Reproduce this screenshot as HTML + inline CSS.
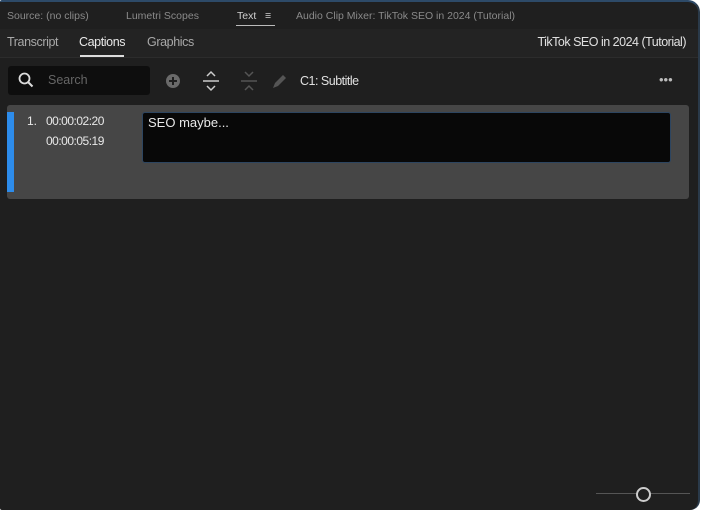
<!DOCTYPE html>
<html><head><style>
html,body{margin:0;padding:0;width:701px;height:511px;overflow:hidden;background:#fff}
body{font-family:"Liberation Sans",sans-serif;}
#p{position:absolute;left:0;top:0;width:700px;height:510px;background:#1f1f1f;border-radius:2px 12px 10px 2px;border-top:2px solid #2d4a68;border-right:2px solid #2a3a4a;box-sizing:border-box;overflow:hidden}
.t{position:absolute;white-space:nowrap}
</style></head><body>
<div id="p">
<div class="t" style="left:7px;top:8px;font-size:10.5px;color:#8a8a8a">Source: (no clips)</div>
<div class="t" style="left:126px;top:8px;font-size:10.5px;color:#8a8a8a">Lumetri Scopes</div>
<div class="t" style="left:237px;top:8px;font-size:10.5px;color:#d0d0d0">Text&nbsp;&nbsp; ≡</div>
<div style="position:absolute;left:236px;top:23px;width:39px;height:1px;background:#bbb"></div>
<div class="t" style="left:296px;top:8px;font-size:10.5px;color:#8a8a8a">Audio Clip Mixer: TikTok SEO in 2024 (Tutorial)</div>
<div style="position:absolute;left:0;top:27px;width:700px;height:28px;background:#232323;border-bottom:1px solid #2c2c2c"></div>
<div class="t" style="left:7px;top:33px;font-size:12.5px;color:#a8a8a8;letter-spacing:-0.4px">Transcript</div>
<div class="t" style="left:79px;top:33px;font-size:12.5px;color:#e8e8e8;letter-spacing:-0.4px">Captions</div>
<div style="position:absolute;left:80px;top:53px;width:44px;height:2px;background:#ddd"></div>
<div class="t" style="left:147px;top:33px;font-size:12.5px;color:#a8a8a8;letter-spacing:-0.4px">Graphics</div>
<div class="t" style="right:12px;top:33px;font-size:12.5px;color:#e0e0e0;letter-spacing:-0.5px">TikTok SEO in 2024 (Tutorial)</div>
<div style="position:absolute;left:8px;top:64px;width:142px;height:29px;background:#0e0e0e;border-radius:3px"></div>
<svg style="position:absolute;left:18px;top:70px" width="16" height="16"><circle cx="6.5" cy="6.5" r="5" fill="none" stroke="#ddd" stroke-width="1.8"/><line x1="10" y1="10" x2="14.5" y2="14.5" stroke="#ddd" stroke-width="2"/></svg>
<div class="t" style="left:48px;top:71px;font-size:12.5px;color:#666">Search</div>
<svg style="position:absolute;left:165px;top:71px" width="16" height="16"><circle cx="8" cy="8" r="7" fill="#6a6a6a"/><path d="M8 4v8M4 8h8" stroke="#1f1f1f" stroke-width="2"/></svg>
<svg style="position:absolute;left:202px;top:68px" width="18" height="22"><path d="M5 6l4-4 4 4M5 16l4 4 4-4M1 11h16" fill="none" stroke="#ccc" stroke-width="1.5"/></svg>
<svg style="position:absolute;left:240px;top:68px" width="18" height="22"><path d="M5 2l4 4 4-4M5 20l4-4 4 4M1 11h16" fill="none" stroke="#555" stroke-width="1.5"/></svg>
<svg style="position:absolute;left:271px;top:70px" width="16" height="18"><path d="M2 16l2-5 8-8 3 3-8 8z" fill="#555"/></svg>
<div class="t" style="left:300px;top:72px;font-size:12.5px;color:#e0e0e0;letter-spacing:-0.5px">C1: Subtitle</div>
<div class="t" style="left:659px;top:70px;font-size:13px;color:#bbb">•••</div>
<div style="position:absolute;left:7px;top:103px;width:682px;height:94px;background:#464646;border-radius:3px"></div>
<div style="position:absolute;left:7px;top:110px;width:7px;height:80px;background:#2d8ceb"></div>
<div class="t" style="left:27px;top:112px;font-size:12px;color:#e8e8e8">1.</div>
<div class="t" style="left:46px;top:112px;font-size:12px;color:#e8e8e8;letter-spacing:-0.5px">00:00:02:20</div>
<div class="t" style="left:46px;top:132px;font-size:12px;color:#e8e8e8;letter-spacing:-0.5px">00:00:05:19</div>
<div style="position:absolute;left:142px;top:110px;width:529px;height:51px;background:#080808;border:1px solid #2d4560;border-radius:3px;box-sizing:border-box"></div>
<div class="t" style="left:148px;top:113px;font-size:13px;color:#e8e8e8">SEO maybe...</div>
<div style="position:absolute;left:596px;top:491px;width:94px;height:1px;background:#555"></div>
<div style="position:absolute;left:636px;top:485px;width:11px;height:11px;border:2px solid #ccc;border-radius:50%;background:#1f1f1f"></div>
</div>
</body></html>
